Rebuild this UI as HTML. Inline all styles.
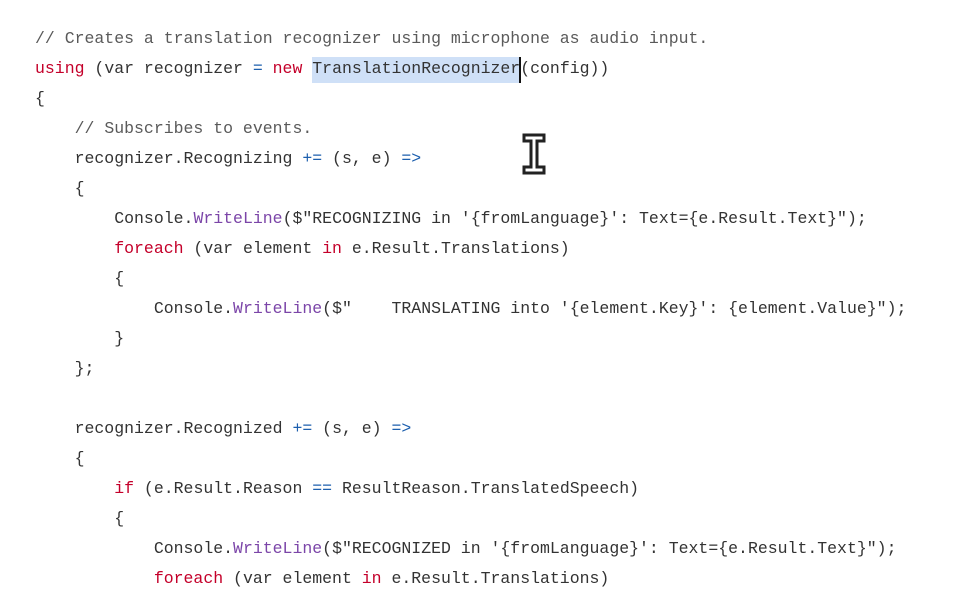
<!DOCTYPE html>
<html><head><meta charset="utf-8"><style>
html,body{margin:0;padding:0;background:#fff;width:978px;height:595px;overflow:hidden}
pre{position:absolute;left:35px;top:24px;margin:0;font-family:"Liberation Mono",monospace;font-size:16.5px;line-height:30px;color:#333}
.c{color:#5a5a5a}.k{color:#c4002a}.o{color:#1d5fae}.m{color:#7b45a8}
.hl{position:absolute;left:312px;top:57px;width:208px;height:26px;background:#cfe0f7}
.cur{position:absolute;left:519px;top:57px;width:2px;height:26px;background:#111}
.ib{position:absolute;left:522px;top:133px}
</style></head><body>
<div class="hl"></div>
<pre><span class="c">// Creates a translation recognizer using microphone as audio input.</span>
<span class="k">using</span> (var recognizer <span class="o">=</span> <span class="k">new</span> TranslationRecognizer(config))
{
    <span class="c">// Subscribes to events.</span>
    recognizer.Recognizing <span class="o">+=</span> (s, e) <span class="o">=&gt;</span>
    {
        Console.<span class="m">WriteLine</span>($"RECOGNIZING in '{fromLanguage}': Text={e.Result.Text}");
        <span class="k">foreach</span> (var element <span class="k">in</span> e.Result.Translations)
        {
            Console.<span class="m">WriteLine</span>($"    TRANSLATING into '{element.Key}': {element.Value}");
        }
    };

    recognizer.Recognized <span class="o">+=</span> (s, e) <span class="o">=&gt;</span>
    {
        <span class="k">if</span> (e.Result.Reason <span class="o">==</span> ResultReason.TranslatedSpeech)
        {
            Console.<span class="m">WriteLine</span>($"RECOGNIZED in '{fromLanguage}': Text={e.Result.Text}");
            <span class="k">foreach</span> (var element <span class="k">in</span> e.Result.Translations)</pre>
<div class="cur"></div>
<svg class="ib" width="24" height="42" viewBox="0 0 24 42"><path d="M2 2H22V8H15V34H22V40H2V34H9V8H2Z" fill="#fff" stroke="#222" stroke-width="3" stroke-linejoin="miter"/></svg>
</body></html>
